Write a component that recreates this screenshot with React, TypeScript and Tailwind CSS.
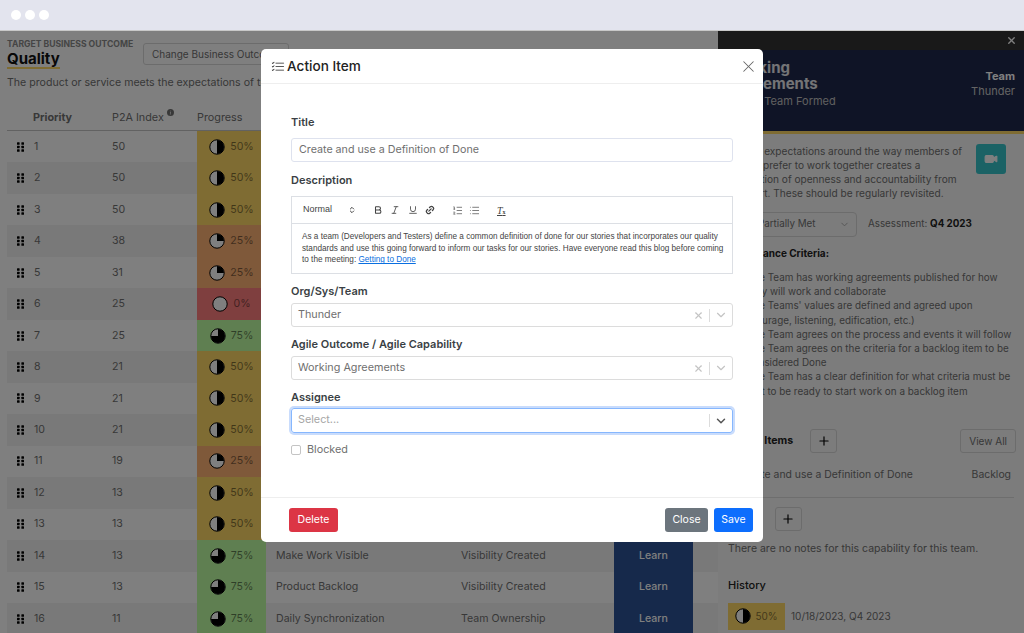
import { Bold, ChevronDown, ChevronsUpDown, Italic, Link2, List, ListOrdered, Plus, Underline, Video, X } from 'lucide-react'
import { BsInfoCircleFill, BsListCheck } from 'react-icons/bs'

const rows = [
  { n: 1, idx: 50, pct: 50 },
  { n: 2, idx: 50, pct: 50 },
  { n: 3, idx: 50, pct: 50 },
  { n: 4, idx: 38, pct: 25 },
  { n: 5, idx: 31, pct: 25 },
  { n: 6, idx: 25, pct: 0 },
  { n: 7, idx: 25, pct: 75 },
  { n: 8, idx: 21, pct: 50 },
  { n: 9, idx: 21, pct: 50 },
  { n: 10, idx: 21, pct: 50 },
  { n: 11, idx: 19, pct: 25 },
  { n: 12, idx: 13, pct: 50 },
  { n: 13, idx: 13, pct: 50 },
  { n: 14, idx: 13, pct: 75, name: 'Make Work Visible', outcome: 'Visibility Created' },
  { n: 15, idx: 13, pct: 75, name: 'Product Backlog', outcome: 'Visibility Created' },
  { n: 16, idx: 11, pct: 75, name: 'Daily Synchronization', outcome: 'Team Ownership' },
]

const criteria = [
  'The Team has working agreements published for how they will work and collaborate',
  "The Teams' values are defined and agreed upon (courage, listening, edification, etc.)",
  'The Team agrees on the process and events it will follow',
  'The Team agrees on the criteria for a backlog item to be considered Done',
  'The Team has a clear definition for what criteria must be met to be ready to start work on a backlog item',
]

function Pie({ pct }: { pct: number }) {
  let wedge = ''
  if (pct === 25) wedge = 'M8 8V1a7 7 0 0 1 7 7z'
  if (pct === 50) wedge = 'M8 1a7 7 0 0 1 0 14z'
  if (pct === 75) wedge = 'M8 8V1a7 7 0 1 1-7 7z'
  return (
    <svg width="16" height="16" viewBox="0 0 16 16" className="shrink-0">
      <circle cx="8" cy="8" r="7.2" fill="#ffffff" stroke="#000000" strokeWidth="1" />
      {wedge && <path d={wedge} fill="#000000" />}
    </svg>
  )
}

function Grip() {
  return (
    <svg width="7" height="10" viewBox="0 0 8 11" className="shrink-0">
      <rect x="0" y="0" width="3" height="3" rx="0.6" fill="#000" />
      <rect x="5" y="0" width="3" height="3" rx="0.6" fill="#000" />
      <rect x="0" y="4" width="3" height="3" rx="0.6" fill="#000" />
      <rect x="5" y="4" width="3" height="3" rx="0.6" fill="#000" />
      <rect x="0" y="8" width="3" height="3" rx="0.6" fill="#000" />
      <rect x="5" y="8" width="3" height="3" rx="0.6" fill="#000" />
    </svg>
  )
}

function pctColor(pct: number) {
  if (pct === 25) return 'bg-[#ffb274]'
  if (pct === 50) return 'bg-[#ffd866]'
  if (pct === 75) return 'bg-[#bfffa3]'
  return 'bg-[#ff7e7e]'
}

function SelectBox({ value }: { value: string }) {
  return (
    <div className="flex h-[24px] items-center rounded-[3px] border border-[#dcdcdc] pl-[6px]">
      <span className="flex-1 text-[10.8px] text-[#6f6f6f]">{value}</span>
      <X className="mr-[5px] h-[11px] w-[11px] text-[#c4c4c4]" strokeWidth={2.5} />
      <span className="h-[13px] w-px bg-[#dcdcdc]" />
      <ChevronDown className="mx-[4px] h-[14px] w-[14px] text-[#c4c4c4]" strokeWidth={2} />
    </div>
  )
}

function Label({ children }: { children: string }) {
  return <div className="text-[11px] leading-[16px] font-semibold text-[#3a3f44]">{children}</div>
}

export default function App() {
  return (
    <div className="relative flex h-[633px] w-[1024px] flex-col overflow-hidden bg-white font-['Inter',sans-serif] text-[#707070]">
      {/* Browser bar */}
      <div className="flex h-[31px] shrink-0 items-center gap-[4px] border-b border-[#c8c8c8] bg-[#e3e4ee] pb-[1px] pl-[11px]">
        <span className="h-[10px] w-[10px] rounded-full bg-white" />
        <span className="h-[10px] w-[10px] rounded-full bg-white" />
        <span className="h-[10px] w-[10px] rounded-full bg-white" />
      </div>

      <div className="flex flex-1">
        {/* Left: outcome table */}
        <div className="w-[718px] pt-[8px] pl-[7px]">
          <div className="flex h-[33px] items-start">
            <div className="w-[136px]">
              <div className="text-[8.6px] leading-[10px] font-bold text-[#8a8a8a]">TARGET BUSINESS OUTCOME</div>
              <div className="mt-[1px] text-[15px] leading-[17px] font-bold text-[#111]">Quality</div>
              <div className="h-[2px] w-[53px] bg-[#ffd866]" />
            </div>
            <div className="mt-[4px] rounded-[3px] border border-[#d8d8d8] px-[8px] py-[4px] text-[10px] leading-[12px]">Change Business Outcome</div>
          </div>
          <div className="mt-[4px] text-[10.6px] leading-[14px]">The product or service meets the expectations of the customer</div>
          <div className="mt-[16px] flex h-[25px] items-center border-b border-[#c4c4c4] text-[10.8px]">
            <span className="w-[105px] pl-[26px] font-bold">Priority</span>
            <span className="flex w-[85px] items-start gap-[3px]">P2A Index <BsInfoCircleFill className="mt-[-1px] h-[7px] w-[7px]" /></span>
            <span>Progress</span>
          </div>
          {rows.map((r) => (
            <div key={r.n} className={`flex h-[31.47px] items-center text-[10.6px] ${r.n % 2 === 0 ? 'bg-[#f3f3f3]' : ''}`}>
              <span className="flex w-[105px] items-center gap-[10px] pl-[10px]">
                <Grip />
                {r.n}
              </span>
              <span className="w-[85px]">{r.idx}</span>
              <span className={`flex h-full w-[69px] items-center justify-center gap-[5px] ${pctColor(r.pct)}`}>
                <Pie pct={r.pct} />
                <span className="text-black/50">{r.pct}%</span>
              </span>
              <span className="w-[195px] pl-[10px]">{r.name}</span>
              <span className="w-[153px]">{r.outcome}</span>
              <span className="flex h-full w-[79px] items-center justify-center bg-[#2c5296] font-medium text-white">Learn</span>
            </div>
          ))}
        </div>

        {/* Right: capability panel */}
        <div className="w-[306px] bg-[#f8f8f8]">
          <div className="flex h-[19px] items-center justify-end bg-[#333] pr-[7px]">
            <X className="h-[11px] w-[11px] text-white" strokeWidth={3} />
          </div>
          <div className="flex h-[84px] items-start justify-between border-b-[3px] border-[#ffd866] bg-[#1f284c] pt-[10px] pr-[9px] pl-[10px]">
            <div>
              <div className="text-[15px] leading-[16px] font-bold text-white/90">Working<br />Agreements</div>
              <div className="mt-[1px] text-[11px] leading-[16px] text-[#c0c0c0]">Stage: Team Formed</div>
            </div>
            <div className="mt-[9px] text-right text-[11px] leading-[15px] text-[#c8c8c8]">
              <div className="font-bold text-white">Team</div>
              <div>Thunder</div>
            </div>
          </div>
          <div className="px-[10px] pt-[10px]">
            <div className="flex gap-[10px]">
              <p className="w-[238px] text-[10.1px] leading-[14px]">Setting expectations around the way members of a team prefer to work together creates a foundation of openness and accountability from the start. These should be regularly revisited.</p>
              <div className="flex h-[30px] w-[30px] items-center justify-center rounded-[3px] bg-[#36c4cb]">
                <Video className="h-[14px] w-[14px] fill-white text-white" />
              </div>
            </div>
            <div className="mt-[12px] flex items-center gap-[11px] text-[9.8px]">
              <div className="flex h-[25px] w-[129px] items-center justify-between rounded-[4px] border border-[#d8d8d8] pr-[6px] pl-[29px]">
                Partially Met
                <ChevronDown className="h-[11px] w-[11px] text-[#a8a8a8]" />
              </div>
              <span>Assessment: <b className="text-[#222]">Q4 2023</b></span>
            </div>
            <div className="mt-[9px] text-[10px] leading-[14px] font-bold text-[#222]">Acceptance Criteria:</div>
            <ul className="mt-[10px] mr-[-6px] ml-[19px] list-disc text-[9.9px] leading-[14.2px]">
              {criteria.map((c) => (
                <li key={c}>{c}</li>
              ))}
            </ul>
            <div className="mt-[31px] flex items-center">
              <span className="text-[10.6px] font-bold text-[#222]">Action Items</span>
              <span className="ml-[17px] flex h-[24px] w-[27px] items-center justify-center rounded-[3px] border border-[#d8d8d8]">
                <Plus className="h-[14px] w-[14px] text-black" strokeWidth={2} />
              </span>
              <span className="mr-[-2px] ml-auto rounded-[3px] border border-[#d8d8d8] px-[8px] py-[4px] text-[10px] leading-[14px]">View All</span>
            </div>
            <div className="mt-[15px] flex justify-between border-b border-[#dcdcdc] pb-[15px] pl-[10px] text-[10.4px] leading-[14px]">
              <span>Create and use a Definition of Done</span>
              <span className="mr-[3px]">Backlog</span>
            </div>
            <div className="mt-[9px] flex items-center gap-[16px]">
              <span className="text-[10.6px] font-bold text-[#222]">Notes</span>
              <span className="flex h-[24px] w-[27px] items-center justify-center rounded-[3px] border border-[#d8d8d8]">
                <Plus className="h-[14px] w-[14px] text-black" strokeWidth={2} />
              </span>
            </div>
            <div className="mt-[11px] text-[10.5px] leading-[14px]">There are no notes for this capability for this team.</div>
            <div className="mt-[22px] text-[11px] leading-[14px] font-medium text-[#222]">History</div>
            <div className="mt-[11px] flex items-center gap-[6px] text-[10px]">
              <span className="flex h-[27px] w-[57px] items-center justify-center gap-[4px] bg-[#ffd866] text-black/50">
                <Pie pct={50} />
                50%
              </span>
              10/18/2023, Q4 2023
            </div>
          </div>
        </div>
      </div>

      {/* Backdrop */}
      <div className="absolute inset-x-0 top-[31px] bottom-0 bg-black/50" />

      {/* Modal */}
      <div className="absolute top-[49px] left-[261px] flex h-[493px] w-[502px] flex-col rounded-[5px] bg-white">
        <div className="flex h-[35px] shrink-0 items-center border-b border-[#eeeeee] pt-[1px] pr-[5px] pl-[10px]">
          <BsListCheck className="h-[14px] w-[14px] text-[#222]" />
          <span className="ml-[2px] flex-1 text-[13.6px] font-medium text-[#222]">Action Item</span>
          <X className="h-[19px] w-[19px] text-[#666]" strokeWidth={1.3} />
        </div>
        <div className="flex-1 px-[30px] pt-[30px]">
          <Label>Title</Label>
          <div className="mt-[8px] flex h-[24px] items-center rounded-[3px] border border-[#dee2ee] pt-[1px] pl-[7px] text-[10.7px] text-[#6f6f6f]">Create and use a Definition of Done</div>
          <div className="mt-[10px]"><Label>Description</Label></div>
          <div className="mt-[8px] h-[78px] border border-[#dcdfe4]">
            <div className="flex h-[27px] items-center border-b border-[#dcdfe4] text-[#444]">
              <span className="ml-[11px] w-[45px] font-['Liberation_Sans',sans-serif] text-[9px]">Normal</span>
              <ChevronsUpDown className="h-[8px] w-[8px]" strokeWidth={3} />
              <Bold className="ml-[17px] h-[10px] w-[10px]" strokeWidth={2.5} />
              <Italic className="ml-[7px] h-[10px] w-[10px]" strokeWidth={2} />
              <Underline className="ml-[8px] h-[10px] w-[10px]" strokeWidth={2} />
              <Link2 className="ml-[7px] h-[10px] w-[10px] -rotate-45" strokeWidth={3} />
              <ListOrdered className="ml-[17px] h-[11px] w-[11px]" strokeWidth={1.5} />
              <List className="ml-[6px] h-[11px] w-[11px]" strokeWidth={1.5} />
              <span className="ml-[17px] font-['Liberation_Serif',serif] text-[10px] italic underline">T<span className="text-[6px] font-bold not-italic">x</span></span>
            </div>
            <div className="whitespace-nowrap px-[10px] pt-[7px] font-['Liberation_Sans',sans-serif] text-[8.2px] leading-[11.7px] text-[#444]">
              As a team (Developers and Testers) define a common definition of done for our stories that incorporates our quality<br />
              standards and use this going forward to inform our tasks for our stories. Have everyone read this blog before coming<br />
              to the meeting: <span className="text-[#0a6fe0] underline">Getting to Done</span>
            </div>
          </div>
          <div className="mt-[9px]"><Label>Org/Sys/Team</Label></div>
          <div className="mt-[4px]"><SelectBox value="Thunder" /></div>
          <div className="mt-[9px]"><Label>Agile Outcome / Agile Capability</Label></div>
          <div className="mt-[4px]"><SelectBox value="Working Agreements" /></div>
          <div className="mt-[9px]"><Label>Assignee</Label></div>
          <div className="mt-[3px] flex h-[25px] items-center rounded-[3px] border border-[#86b7fe] pl-[6px] shadow-[0_0_0_2px_#c9dcfc]">
            <span className="flex-1 text-[10.8px] text-[#a6a6a6]">Select...</span>
            <span className="h-[13px] w-px bg-[#dcdcdc]" />
            <ChevronDown className="mx-[4px] h-[14px] w-[14px] text-[#555]" strokeWidth={2.5} />
          </div>
          <div className="mt-[11px] flex items-center gap-[6px] text-[10.8px] leading-[12px] text-[#6f6f6f]">
            <span className="h-[10px] w-[10px] rounded-[2px] border border-[#c4c4c4]" />
            Blocked
          </div>
        </div>
        <div className="flex h-[45px] shrink-0 items-center justify-between border-t border-[#eeeeee] pr-[10px] pl-[28px] text-[10.5px] text-white">
          <span className="flex h-[24px] w-[49px] items-center justify-center rounded-[3px] bg-[#dc3545]">Delete</span>
          <div className="flex gap-[6px]">
            <span className="flex h-[24px] w-[43px] items-center justify-center rounded-[3px] bg-[#6c757d]">Close</span>
            <span className="flex h-[24px] w-[39px] items-center justify-center rounded-[3px] bg-[#0d6efd]">Save</span>
          </div>
        </div>
      </div>
    </div>
  )
}
